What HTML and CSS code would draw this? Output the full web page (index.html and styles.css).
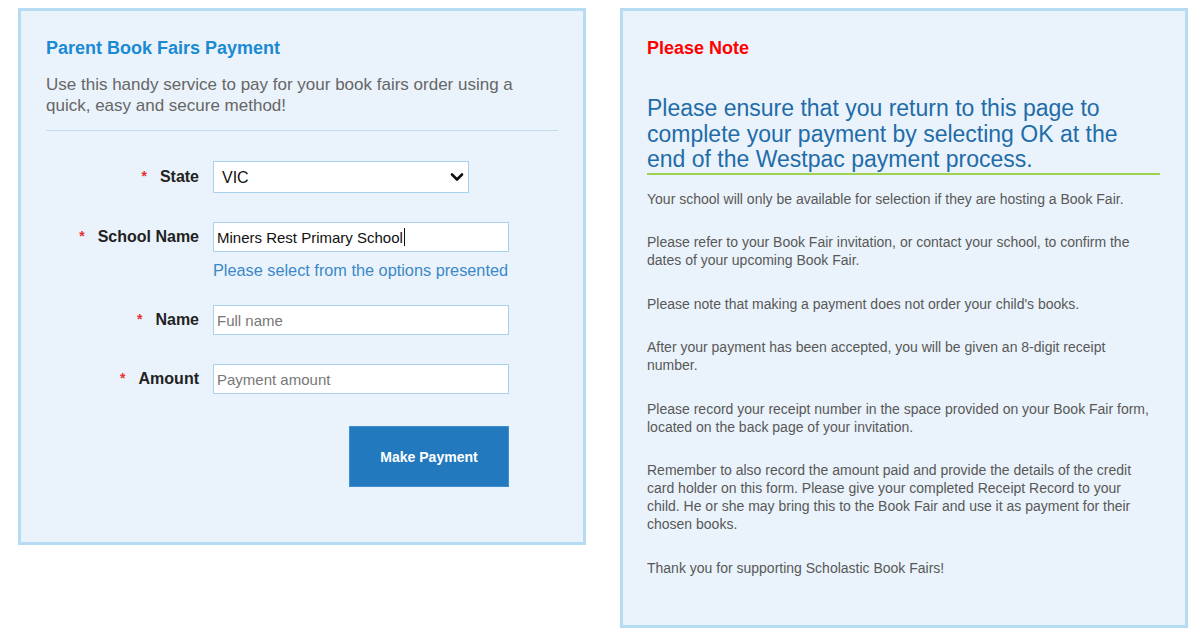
FILE: index.html
```html
<!DOCTYPE html>
<html>
<head>
    <meta charset="utf-8">
    <title>Parent Book Fairs Payment</title>
    <link rel="stylesheet" href="styles.css">
</head>
<body>
<div class="page">

    <div class="panel panel-form">
        <h2 class="form-title">Parent Book Fairs Payment</h2>
        <p class="intro">Use this handy service to pay for your book fairs order using a quick, easy and secure method!</p>
        <hr class="rule">

        <form class="pay-form" onsubmit="return false">
            <div class="field field-state">
                <label for="state"><span class="req">*</span>State</label>
                <div class="select-wrap">
                    <select id="state" name="state">
                        <option>VIC</option>
                        <option>NSW</option>
                        <option>QLD</option>
                        <option>SA</option>
                        <option>WA</option>
                        <option>TAS</option>
                        <option>ACT</option>
                        <option>NT</option>
                    </select>
                    <svg class="chevron" width="14" height="10" viewBox="0 0 14 10"><path d="M2 2.5 L7 7.5 L12 2.5" fill="none" stroke="#111" stroke-width="2.6" stroke-linecap="round" stroke-linejoin="round"/></svg>
                </div>
            </div>

            <div class="field field-school">
                <label for="school"><span class="req">*</span>School Name</label>
                <div class="fake-input" id="school">Miners Rest Primary School<span class="caret"></span></div>
            </div>
            <div class="hint">Please select from the options presented</div>

            <div class="field field-name">
                <label for="fullname"><span class="req">*</span>Name</label>
                <input type="text" id="fullname" placeholder="Full name">
            </div>

            <div class="field field-amount">
                <label for="amount"><span class="req">*</span>Amount</label>
                <input type="text" id="amount" placeholder="Payment amount">
            </div>

            <div class="actions">
                <button type="submit" class="btn-pay">Make Payment</button>
            </div>
        </form>
    </div>

    <div class="panel panel-note">
        <h2 class="note-title">Please Note</h2>
        <p class="note-lead">Please ensure that you return to this page to complete your payment by selecting OK at the end of the Westpac payment process.</p>

        <p>Your school will only be available for selection if they are hosting a Book Fair.</p>
        <p>Please refer to your Book Fair invitation, or contact your school, to confirm the dates of your upcoming Book Fair.</p>
        <p>Please note that making a payment does not order your child's books.</p>
        <p>After your payment has been accepted, you will be given an 8-digit receipt number.</p>
        <p>Please record your receipt number in the space provided on your Book Fair form, located on the back page of your invitation.</p>
        <p>Remember to also record the amount paid and provide the details of the credit card holder on this form. Please give your completed Receipt Record to your child. He or she may bring this to the Book Fair and use it as payment for their chosen books.</p>
        <p>Thank you for supporting Scholastic Book Fairs!</p>
    </div>

</div>
</body>
</html>
```

FILE: styles.css
```css
body {
    margin: 0;
    background: #fff;
    font-family: "Liberation Sans", Arial, sans-serif;
    color: #444;
}

.page {
    display: flex;
    align-items: flex-start;
    gap: 34px;
    padding: 8px 0 0 18px;
}

.panel {
    box-sizing: border-box;
    width: 568px;
    background: #eaf3fb;
    border: 3px solid #b6dbf2;
}

/* left: payment form */
.panel-form {
    padding: 26px 25px 55px 25px;
}

.form-title {
    margin: 0;
    font-size: 18px;
    line-height: 22px;
    font-weight: bold;
    color: #1b8ad3;
}

.intro {
    margin: 15px 0 0 0;
    font-size: 17px;
    line-height: 21px;
    color: #666;
}

.rule {
    margin: 14px 0 0 0;
    border: 0;
    border-top: 1px solid #c2dced;
    height: 0;
}

.pay-form {
    margin-top: 30px;
}

.field {
    display: flex;
    align-items: center;
}

.field label {
    box-sizing: border-box;
    width: 153px;
    margin-right: 14px;
    text-align: right;
    font-size: 16px;
    font-weight: bold;
    color: #222;
}

.req {
    color: #e8312f;
    font-size: 14px;
    margin-right: 13px;
    position: relative;
    top: -1px;
}

.select-wrap {
    position: relative;
    width: 256px;
    height: 32px;
}

.select-wrap select {
    -webkit-appearance: none;
    appearance: none;
    box-sizing: border-box;
    width: 100%;
    height: 32px;
    padding: 0 8px;
    border: 1px solid #a9d0ec;
    border-radius: 0;
    background: #fff;
    font-family: inherit;
    font-size: 16px;
    color: #111;
}

.chevron {
    position: absolute;
    right: 5px;
    top: 11px;
    pointer-events: none;
}

.field input,
.fake-input {
    box-sizing: border-box;
    width: 296px;
    height: 30px;
    padding: 0 3px;
    border: 1px solid #a9d0ec;
    border-radius: 0;
    background: #fff;
    font-family: inherit;
    font-size: 15px;
    color: #111;
    outline: none;
}

.fake-input {
    display: flex;
    align-items: center;
}

.caret {
    display: inline-block;
    width: 1px;
    height: 18px;
    margin-left: 1px;
    background: #111;
}

.field input::placeholder {
    color: #777;
}

.field-school {
    margin-top: 29px;
}

.hint {
    margin: 8px 0 0 167px;
    font-size: 16.3px;
    line-height: 20px;
    color: #3b88c8;
}

.field-name {
    margin-top: 25px;
}

.field-amount {
    margin-top: 29px;
}

.actions {
    display: flex;
    justify-content: flex-end;
    width: 463px;
    margin-top: 32px;
}

.btn-pay {
    width: 160px;
    height: 61px;
    border: 1px solid #3f8fd0;
    background: #2379be;
    color: #fff;
    font-family: inherit;
    font-size: 14px;
    font-weight: bold;
    cursor: pointer;
}

/* right: notes */
.panel-note {
    padding: 26px 25px 48px 24px;
}

.note-title {
    margin: 0;
    font-size: 18px;
    line-height: 22px;
    font-weight: bold;
    color: #f00;
}

.panel-note p {
    max-width: 505px;
    margin: 0 0 25.5px 0;
    font-size: 14px;
    line-height: 18px;
    color: #585858;
}

.panel-note .note-lead {
    max-width: none;
    margin: 37px 0 15px 0;
    border-bottom: 2px solid #9fd24f;
    font-size: 23px;
    line-height: 25.5px;
    color: #1f6ca9;
}

.panel-note p:last-child {
    margin-bottom: 0;
}
```
